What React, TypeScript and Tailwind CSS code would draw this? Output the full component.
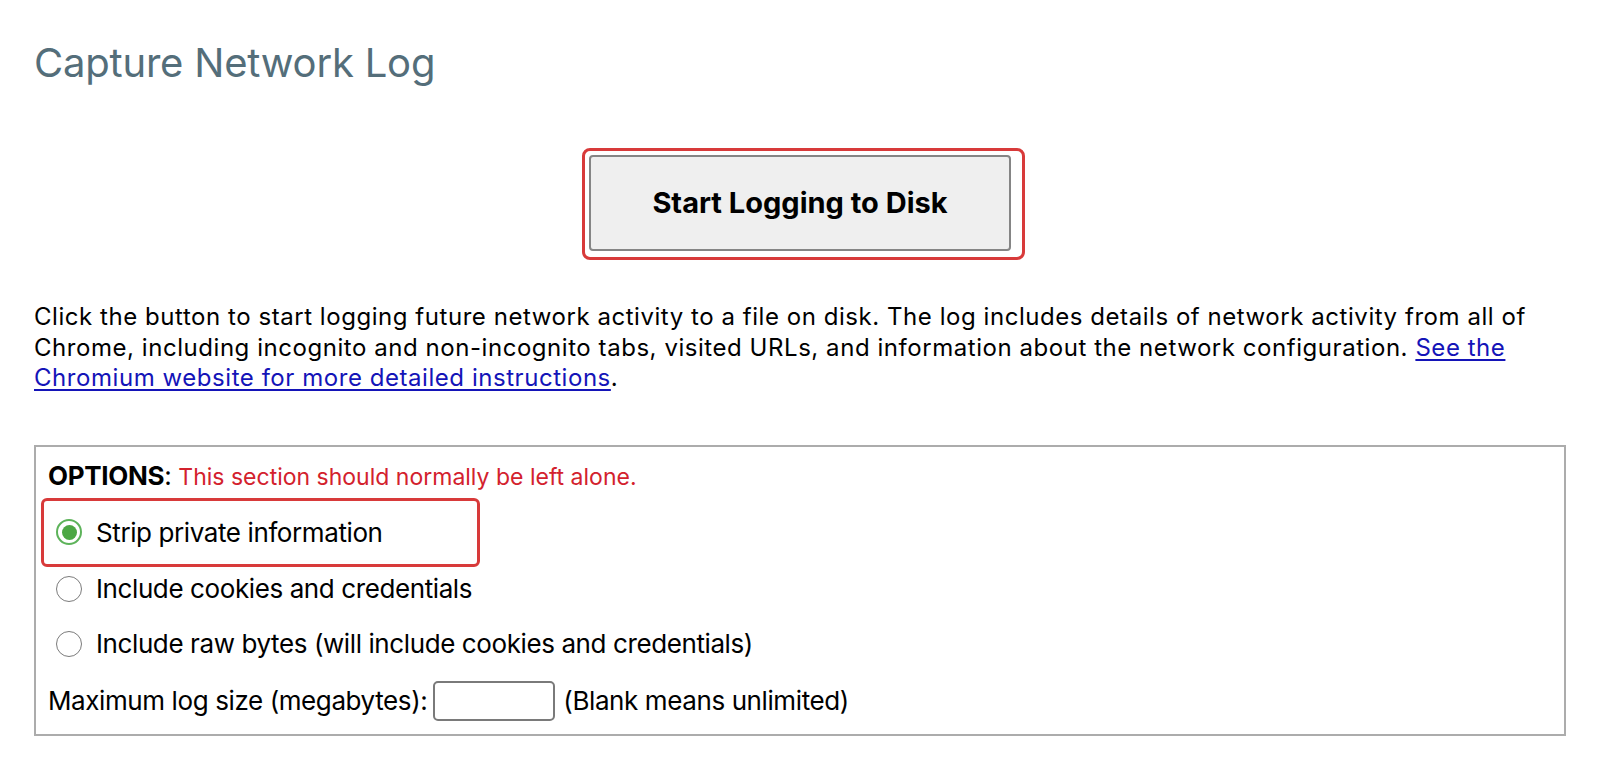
import { useState } from "react";

type Mode = "strip" | "cookies" | "raw";

function Radio({ checked }: { checked: boolean }) {
  return checked ? (
    <span className="flex h-[26px] w-[26px] shrink-0 items-center justify-center rounded-full border-2 border-[#5db35a] bg-white">
      <span className="h-[15px] w-[15px] rounded-full bg-[#4ca744]" />
    </span>
  ) : (
    <span className="h-[26px] w-[26px] shrink-0 rounded-full border-[1.5px] border-[#7b7b7b] bg-white" />
  );
}

export default function App() {
  const [mode, setMode] = useState<Mode>("strip");
  const [maxSize, setMaxSize] = useState("");

  const row = (value: Mode, label: string) => (
    <label
      className="flex cursor-pointer items-center gap-[14px]"
      onClick={() => setMode(value)}
    >
      <Radio checked={mode === value} />
      <span>{label}</span>
    </label>
  );

  return (
    <div
      className="min-h-screen bg-white px-[34px] pt-[38px] text-black"
      style={{ fontFamily: "Inter, 'Liberation Sans', sans-serif" }}
    >
      {/* ── Title ─────────────────────────────────────────── */}
      <h1 className="text-[40px] font-normal leading-[50px] tracking-[-0.2px] text-[#546e7a]">
        Capture Network Log
      </h1>

      {/* ── Start button (highlighted) ────────────────────── */}
      <div className="mt-[60px] flex justify-center">
        <div className="ml-[7px] rounded-[8px] border-[3px] border-[#d83a3a] pb-[6px] pl-[4px] pr-[11px] pt-[4px]">
          <button
            type="button"
            className="h-[96px] w-[422px] cursor-pointer rounded-[4px] border-2 border-[#858585] bg-[#efefef] text-[29px] font-bold"
          >
            Start Logging to Disk
          </button>
        </div>
      </div>

      {/* ── Description ───────────────────────────────────── */}
      <p className="mt-[42px] text-[24px] leading-[30.5px] tracking-[0.55px]">
        Click the button to start logging future network activity to a file on disk. The log
        includes details of network activity from all of Chrome, including incognito and
        non-incognito tabs, visited URLs, and information about the network configuration.{" "}
        <a href="#" className="text-[#1414b8] underline underline-offset-[3px]">
          See the Chromium website for more detailed instructions
        </a>
        .
      </p>

      {/* ── Options ───────────────────────────────────────── */}
      <div className="mt-[51px] border-2 border-[#acacac] pb-[11px] pl-[12px] pr-[12px] pt-[13px] text-[26px] tracking-[-0.4px]">
        <div className="leading-[32px]">
          <span className="font-bold tracking-[-0.3px]">OPTIONS</span>:{" "}
          <span className="text-[23px] tracking-[0px] text-[#d3212d]">
            This section should normally be left alone.
          </span>
        </div>

        <div className="ml-[-7px] mt-[5px] flex h-[69px] w-[439px] items-center rounded-[6px] border-[3px] border-[#d83a3a] pl-[12px]">
          {row("strip", "Strip private information")}
        </div>

        <div className="flex h-[44px] items-center pl-[8px]">
          {row("cookies", "Include cookies and credentials")}
        </div>
        <div className="mt-[11px] flex h-[44px] items-center pl-[8px]">
          {row("raw", "Include raw bytes (will include cookies and credentials)")}
        </div>

        <div className="mt-[13px] flex h-[44px] items-center">
          <span>Maximum log size (megabytes):</span>
          <input
            value={maxSize}
            onChange={(e) => setMaxSize(e.target.value)}
            className="ml-[6px] mr-[8px] h-[40px] w-[122px] rounded-[5px] border-2 border-[#7a7a7a] px-2 outline-none"
          />
          <span>(Blank means unlimited)</span>
        </div>
      </div>
    </div>
  );
}
